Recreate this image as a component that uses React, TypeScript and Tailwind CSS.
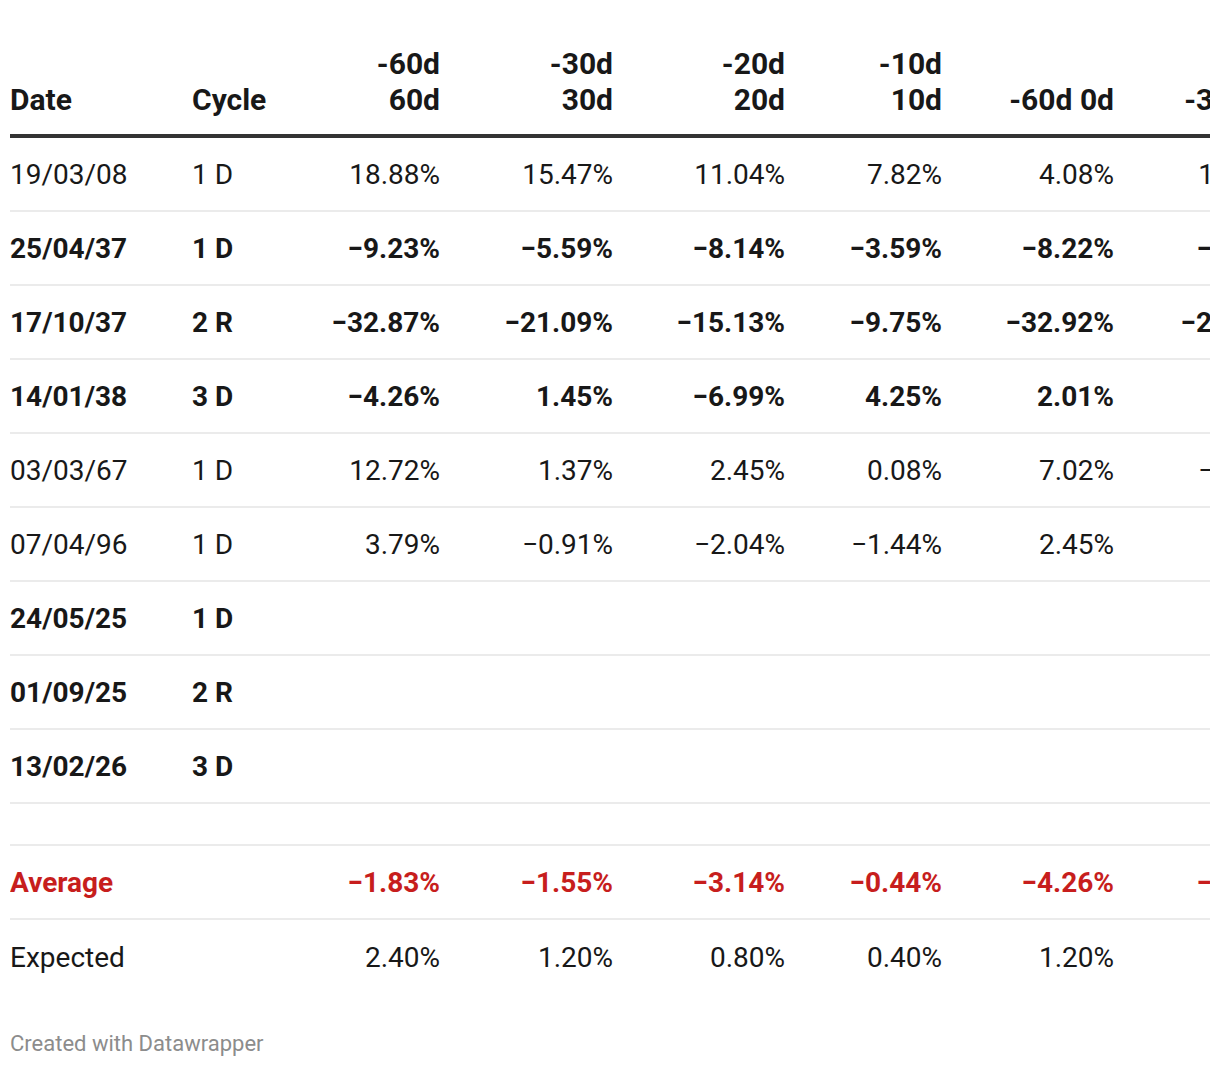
import React from "react";

type Row = {
  date: string;
  cycle: string;
  values: string[];
  bold?: boolean;
};

const widths = ["w-[182px]", "w-[128px]", "w-[120px]", "w-[173px]", "w-[172px]", "w-[157px]", "w-[172px]", "w-[175px]"];

const rows: Row[] = [
  { date: "19/03/08", cycle: "1 D", values: ["18.88%", "15.47%", "11.04%", "7.82%", "4.08%", "11.53%"] },
  { date: "25/04/37", cycle: "1 D", values: ["−9.23%", "−5.59%", "−8.14%", "−3.59%", "−8.22%", "−3.12%"], bold: true },
  { date: "17/10/37", cycle: "2 R", values: ["−32.87%", "−21.09%", "−15.13%", "−9.75%", "−32.92%", "−23.45%"], bold: true },
  { date: "14/01/38", cycle: "3 D", values: ["−4.26%", "1.45%", "−6.99%", "4.25%", "2.01%", "2.50%"], bold: true },
  { date: "03/03/67", cycle: "1 D", values: ["12.72%", "1.37%", "2.45%", "0.08%", "7.02%", "−1.20%"] },
  { date: "07/04/96", cycle: "1 D", values: ["3.79%", "−0.91%", "−2.04%", "−1.44%", "2.45%", "0.50%"] },
  { date: "24/05/25", cycle: "1 D", values: ["", "", "", "", "", ""], bold: true },
  { date: "01/09/25", cycle: "2 R", values: ["", "", "", "", "", ""], bold: true },
  { date: "13/02/26", cycle: "3 D", values: ["", "", "", "", "", ""], bold: true },
];

const headers: [string, string][] = [
  ["-60d", "60d"],
  ["-30d", "30d"],
  ["-20d", "20d"],
  ["-10d", "10d"],
  ["", "-60d 0d"],
  ["", "-30d 0d"],
];

function DataRow({ row, className = "", last = false }: { row: Row; className?: string; last?: boolean }) {
  return (
    <div className={`flex h-[74px] items-center pt-[2px] ${last ? "" : "border-b-2 border-[#ebebeb]"} ${row.bold ? "font-bold" : ""} ${className}`}>
      <div className={`${widths[0]} shrink-0`}>{row.date}</div>
      <div className={`${widths[1]} shrink-0`}>{row.cycle}</div>
      {row.values.map((v, i) => (
        <div key={i} className={`${widths[i + 2]} shrink-0 text-right`}>
          {v}
        </div>
      ))}
    </div>
  );
}

export default function App() {
  return (
    <div className="min-h-screen bg-white px-[10px] pt-[46px] text-[28px] leading-[36px] text-[#181818]" style={{ fontFamily: "Roboto, 'Liberation Sans', sans-serif" }}>
      <div className="w-[1200px] overflow-hidden">
        <div className="w-[1279px]">
          <div className="flex items-end border-b-4 border-[#333333] pb-[16px] text-[30px] font-bold leading-[36px]">
            <div className={`${widths[0]} shrink-0`}>Date</div>
            <div className={`${widths[1]} shrink-0`}>Cycle</div>
            {headers.map(([a, b], i) => (
              <div key={i} className={`${widths[i + 2]} shrink-0 text-right`}>
                {a && <div>{a}</div>}
                <div>{b}</div>
              </div>
            ))}
          </div>

          {rows.map((r) => (
            <DataRow key={r.date} row={r} />
          ))}

          <div className="h-[42px] border-b-2 border-[#ebebeb]" />

          <DataRow
            row={{ date: "Average", cycle: "", values: ["−1.83%", "−1.55%", "−3.14%", "−0.44%", "−4.26%", "−2.10%"], bold: true }}
            className="text-[#c71e1d]"
          />

          <DataRow
            row={{ date: "Expected", cycle: "", values: ["2.40%", "1.20%", "0.80%", "0.40%", "1.20%", "0.80%"] }}
            last
          />
        </div>
      </div>

      <div className="mt-[37px] text-[22px] leading-[26px] text-[#8c8c8c]">Created with Datawrapper</div>
    </div>
  );
}
